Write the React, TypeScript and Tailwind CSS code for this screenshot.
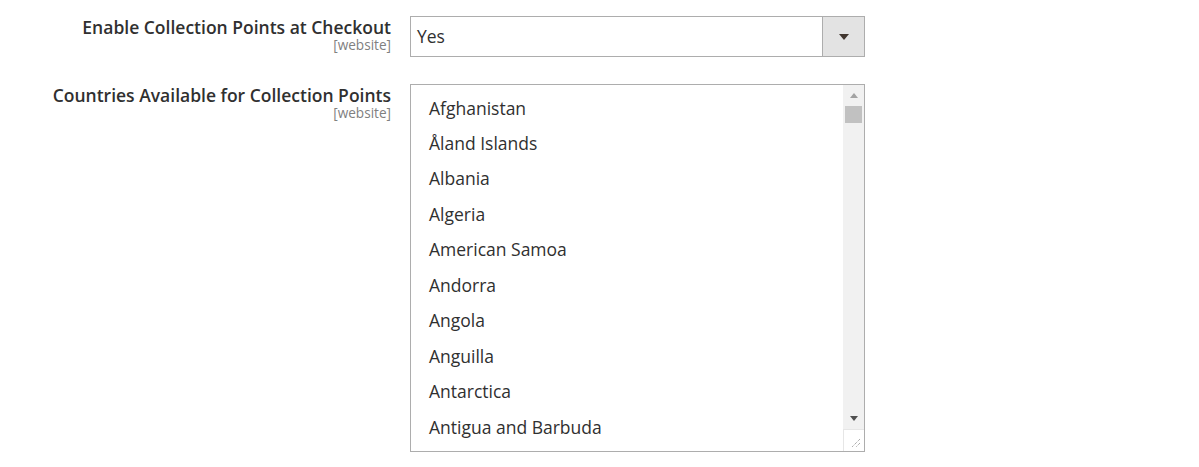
const countries = [
  "Afghanistan",
  "Åland Islands",
  "Albania",
  "Algeria",
  "American Samoa",
  "Andorra",
  "Angola",
  "Anguilla",
  "Antarctica",
  "Antigua and Barbuda",
];

function FieldLabel({ title }: { title: string }) {
  return (
    <div className="flex flex-col items-end text-right">
      <span className="text-[17.5px] font-semibold leading-[22px] text-[#303030]">{title}</span>
      <span className="text-[13.6px] leading-[14px] text-[#808080]">[website]</span>
    </div>
  );
}

export default function App() {
  return (
    <div
      className="h-[467px] w-[1199px] bg-white pt-[16px]"
      style={{ fontFamily: '"Open Sans", sans-serif' }}
    >
      <div className="grid grid-cols-[391px_455px] gap-x-[19px] gap-y-[27px]">
        <FieldLabel title="Enable Collection Points at Checkout" />
        <div className="flex h-[41px] border border-[#adadad]">
          <div className="flex flex-1 items-center pl-[6px] text-[17.5px] text-[#303030]">Yes</div>
          <div className="flex w-[42px] items-center justify-center border-l border-[#adadad] bg-[#e3e3e3]">
            <svg width="10" height="6" viewBox="0 0 10 6">
              <path d="M0 0h10L5 6z" fill="#41362f" />
            </svg>
          </div>
        </div>

        <FieldLabel title="Countries Available for Collection Points" />
        <div className="flex h-[368px] overflow-hidden border border-[#adadad]">
          <div className="flex-1 overflow-hidden py-[5px] pl-[18px]">
            {countries.map((c) => (
              <div key={c} className="flex h-[35.45px] items-center text-[17.5px] text-[#303030]">
                {c}
              </div>
            ))}
          </div>
          <div className="flex w-[21px] flex-col">
            <div className="flex flex-1 flex-col bg-[#f1f1f1]">
              <div className="flex h-[21px] items-center justify-center">
                <svg width="8" height="5" viewBox="0 0 8 5">
                  <path d="M0 5h8L4 0z" fill="#a3a3a3" />
                </svg>
              </div>
              <div className="mx-[2px] h-[17px] bg-[#c1c1c1]" />
              <div className="flex-1" />
              <div className="flex h-[21px] items-center justify-center">
                <svg width="8" height="5" viewBox="0 0 8 5">
                  <path d="M0 0h8L4 5z" fill="#505050" />
                </svg>
              </div>
            </div>
            <div className="flex h-[22px] items-end justify-end border-l border-t border-[#e6e6e6] bg-white p-[3px]">
              <svg width="12" height="12" viewBox="0 0 12 12">
                <path d="M11 3L3 11M11 7L7 11" stroke="#8a8a8a" strokeWidth="1" strokeDasharray="1 1" />
              </svg>
            </div>
          </div>
        </div>
      </div>
    </div>
  );
}
